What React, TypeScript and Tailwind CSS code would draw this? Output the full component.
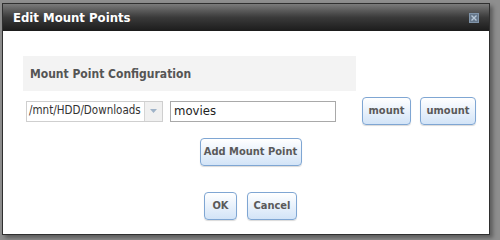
const font = { fontFamily: '"DejaVu Sans Condensed", "DejaVu Sans", Verdana, sans-serif' };

function Btn({ label, w }: { label: string; w: string }) {
  return (
    <button
      type="button"
      className={`${w} h-[28px] shrink-0 whitespace-nowrap rounded-[4px] border border-[#7fa6d3] bg-gradient-to-b from-white to-[#d3e4f7] text-[11px] font-bold text-[#5a5a5a] shadow-[0_1px_1px_rgba(0,0,0,0.15)]`}
    >
      {label}
    </button>
  );
}

export default function App() {
  return (
    <div
      className="h-[240px] w-[500px] overflow-hidden bg-[#8e8e8e] pl-[2px] pt-[3px] font-stretch-condensed"
      style={font}
    >
      <div className="h-[232px] w-[488px] border border-[#2f2f2f] bg-white shadow-[3px_3px_4px_rgba(0,0,0,0.35)]">
        <div className="flex h-[27px] items-center justify-between bg-gradient-to-b from-[#7b7b7b] via-[#3a3a3a] to-[#1c1c1c] pl-[10px] pr-[10px]">
          <span className="text-[13px] font-bold text-white">Edit Mount Points</span>
          <svg width="10" height="10" viewBox="0 0 10 10">
            <rect x="0.5" y="0.5" width="9" height="9" fill="#66778a" stroke="#7f93a8" />
            <path d="M2.5 2.5l5 5M7.5 2.5l-5 5" stroke="#b7c6d6" strokeWidth="1.4" />
          </svg>
        </div>
        <div className="pl-[20px] pt-[25px]">
          <div className="flex h-[35px] w-[333px] items-center bg-[#f3f3f3] pl-[7px] text-[12px] font-bold text-[#555]">
            Mount Point Configuration
          </div>
          <div className="mt-[6px] flex h-[28px] items-center">
            <div className="ml-[3px] flex h-[21px] w-[137px] shrink-0 border border-[#cfcfcf] text-[11.5px] text-[#333]">
              <span className="flex flex-1 items-center pl-[2px]">/mnt/HDD/Downloads</span>
              <span className="flex w-[18px] items-center justify-center border-l border-[#d5d5d5] bg-[#f0f0f0]">
                <svg width="7" height="4" viewBox="0 0 7 4">
                  <path d="M0 0h7L3.5 4z" fill="#9fb3c8" />
                </svg>
              </span>
            </div>
            <div className="ml-[7px] flex h-[21px] w-[166px] shrink-0 items-center border border-[#a9a9a9] pl-[3px] text-[13px] text-[#222]">
              movies
            </div>
            <div className="ml-[26px] flex gap-[9px]">
              <Btn label="mount" w="w-[49px]" />
              <Btn label="umount" w="w-[56px]" />
            </div>
          </div>
          <div className="mt-[13px] flex justify-center pr-[11px]">
            <Btn label="Add Mount Point" w="w-[102px]" />
          </div>
          <div className="mt-[26px] flex justify-center gap-[10px] pr-[11px]">
            <Btn label="OK" w="w-[33px]" />
            <Btn label="Cancel" w="w-[50px]" />
          </div>
        </div>
      </div>
    </div>
  );
}
